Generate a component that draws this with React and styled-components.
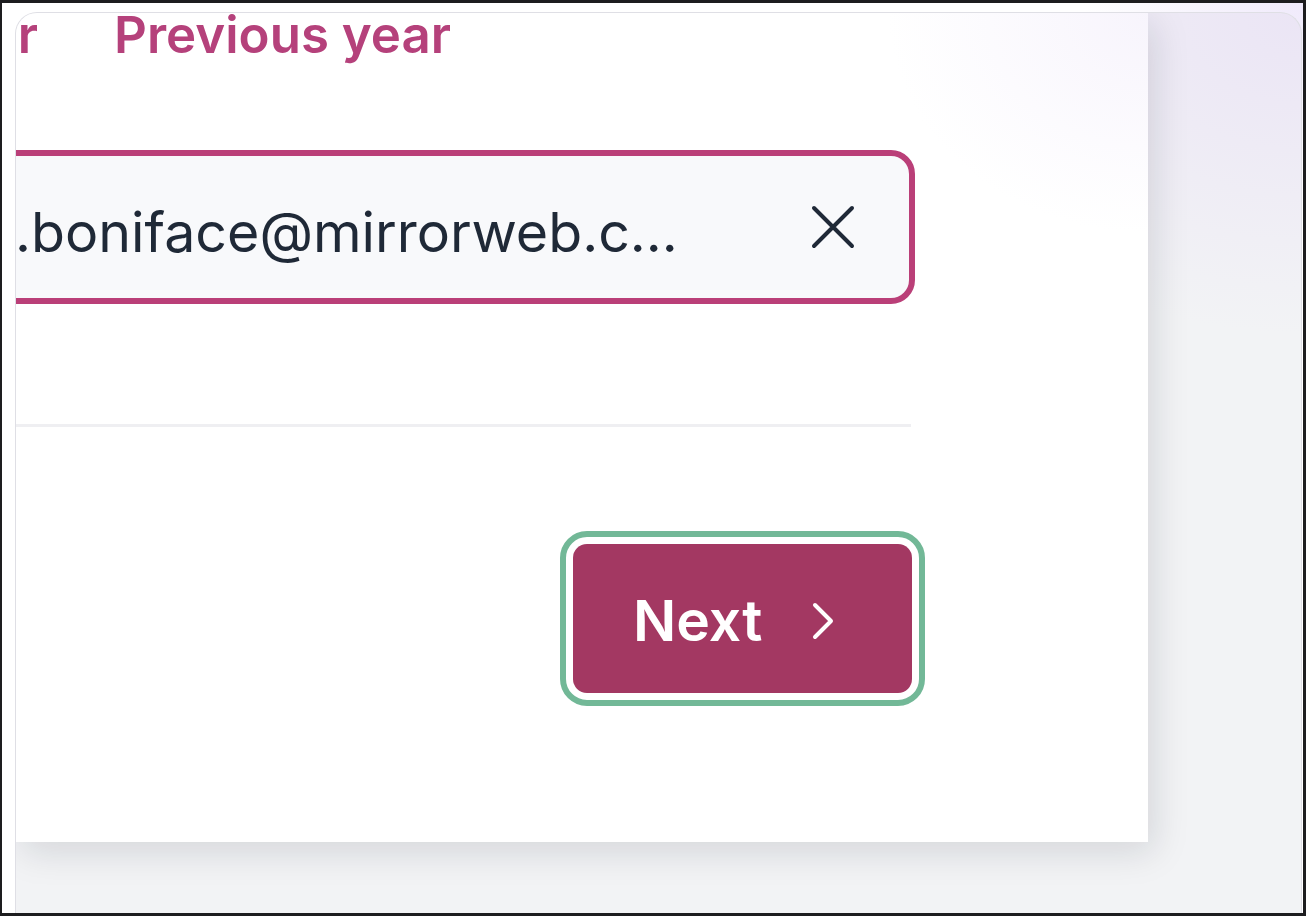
import React from 'react'
import styled, { createGlobalStyle } from 'styled-components'

const GlobalStyle = createGlobalStyle`
  html, body {
    margin: 0;
    padding: 0;
    background: #1d1d1f;
  }
  * {
    box-sizing: border-box;
  }
`

const CloseIcon = () => (
  <svg width="44" height="44" viewBox="0 0 44 44" fill="none">
    <path
      d="M3 3L41 41M41 3L3 41"
      stroke="#1f2937"
      strokeWidth="4"
      strokeLinecap="round"
    />
  </svg>
)

const ChevronIcon = () => (
  <svg width="24" height="40" viewBox="0 0 24 40" fill="none">
    <path
      d="M4 4L20 20L4 36"
      stroke="#ffffff"
      strokeWidth="4"
      strokeLinecap="round"
      strokeLinejoin="round"
    />
  </svg>
)

class App extends React.Component {
  render() {
    return (
      <Frame>
        <GlobalStyle />
        <Window>
          <Panel>
            <Card>
              <Content>
                <TabRow>
                  <Tab>Current year</Tab>
                  <Tab>Previous year</Tab>
                </TabRow>
                <EmailField>
                  <EmailText>.boniface@mirrorweb.c...</EmailText>
                  <ClearButton type="button" aria-label="Remove">
                    <CloseIcon />
                  </ClearButton>
                </EmailField>
                <Divider />
                <Actions>
                  <NextButton type="button">
                    Next
                    <ChevronIcon />
                  </NextButton>
                </Actions>
              </Content>
            </Card>
          </Panel>
        </Window>
      </Frame>
    )
  }
}

export default App

const Frame = styled.div`
  width: 1306px;
  height: 916px;
  padding: 3px 3px 3px 2px;
  background: #1d1d1f;
  display: flex;
  font-family: Inter, 'Noto Sans', sans-serif;
`

const Window = styled.div`
  flex: 1;
  display: flex;
  padding: 9px 1px 0 13px;
  background: radial-gradient(
      circle at 100% 0,
      rgba(236, 229, 250, 0.8),
      rgba(255, 255, 255, 0) 220px
    ),
    #ffffff;
`

const Panel = styled.div`
  flex: 1;
  display: flex;
  align-items: flex-start;
  overflow: hidden;
  border: 1px solid #dfdfe5;
  border-bottom: none;
  border-radius: 22px 22px 0 0;
  background: radial-gradient(
      ellipse 420px 320px at 100% 0,
      #ebe5f5,
      rgba(242, 243, 245, 0) 100%
    ),
    #f2f3f5;
`

const Card = styled.div`
  width: 1132px;
  height: 829px;
  flex: none;
  display: flex;
  justify-content: flex-end;
  padding-right: 233px;
  overflow: hidden;
  background: radial-gradient(
      ellipse 260px 220px at 100% 0,
      rgba(240, 234, 250, 0.5),
      rgba(255, 255, 255, 0) 100%
    ),
    #ffffff;
  box-shadow: 6px 10px 34px rgba(17, 24, 39, 0.13);
`

const Content = styled.div`
  flex: none;
  width: 1000px;
  margin-top: -8px;
  display: flex;
  flex-direction: column;
`

const TabRow = styled.div`
  display: flex;
  justify-content: flex-end;
  gap: 76px;
  padding-right: 464px;
`

const Tab = styled.div`
  flex: none;
  font-size: 51px;
  line-height: 60px;
  font-weight: 600;
  color: #b5417b;
  white-space: nowrap;
`

const EmailField = styled.div`
  margin-top: 85px;
  height: 154px;
  display: flex;
  align-items: center;
  padding: 0 54px 0 94px;
  border: 6px solid #ba3f78;
  border-radius: 24px;
  background: #f8f9fb;
`

const EmailText = styled.div`
  flex: 1;
  padding-top: 8px;
  font-size: 55.5px;
  color: #1f2937;
  white-space: nowrap;
`

const ClearButton = styled.button`
  display: flex;
  padding: 0;
  border: none;
  background: none;
`

const Divider = styled.div`
  height: 3px;
  margin: 120px 4px 0 0;
  background: #efeff2;
`

const Actions = styled.div`
  display: flex;
  justify-content: flex-end;
  padding-right: 3px;
  margin-top: 117px;
`

const NextButton = styled.button`
  width: 339px;
  height: 149px;
  display: flex;
  align-items: center;
  gap: 49px;
  padding: 4px 0 0 60px;
  border: none;
  border-radius: 14px;
  background: #a33862;
  color: #ffffff;
  font-family: Inter, 'Noto Sans', sans-serif;
  font-size: 57px;
  font-weight: 600;
  outline: 6px solid #72b897;
  outline-offset: 7px;
`
